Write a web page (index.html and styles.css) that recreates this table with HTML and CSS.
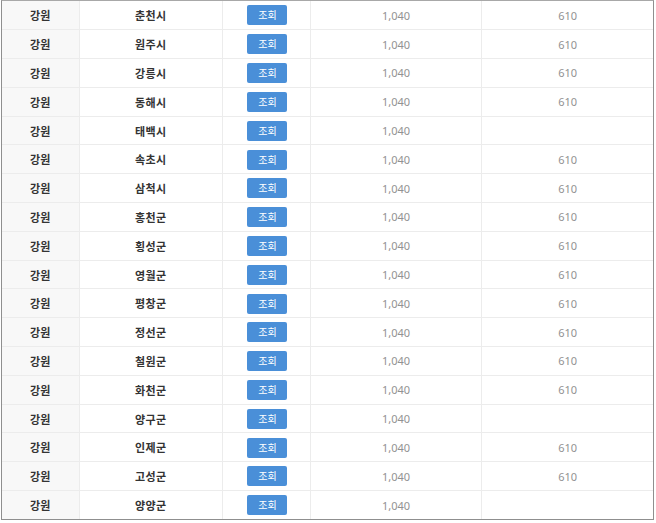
FILE: index.html
```html
<!DOCTYPE html>
<html lang="ko">
<head>
<meta charset="utf-8">
<title>강원 조회</title>
<link rel="stylesheet" href="styles.css">
</head>
<body>
<div class="frame">
<table class="list">
<colgroup>
<col class="c-region"><col class="c-city"><col class="c-btn"><col class="c-num"><col class="c-num">
</colgroup>
<tbody>
<tr><td class="region">강원</td><td class="city">춘천시</td><td class="act"><button class="btn">조회</button></td><td class="num">1,040</td><td class="num">610</td></tr>
<tr><td class="region">강원</td><td class="city">원주시</td><td class="act"><button class="btn">조회</button></td><td class="num">1,040</td><td class="num">610</td></tr>
<tr><td class="region">강원</td><td class="city">강릉시</td><td class="act"><button class="btn">조회</button></td><td class="num">1,040</td><td class="num">610</td></tr>
<tr><td class="region">강원</td><td class="city">동해시</td><td class="act"><button class="btn">조회</button></td><td class="num">1,040</td><td class="num">610</td></tr>
<tr><td class="region">강원</td><td class="city">태백시</td><td class="act"><button class="btn">조회</button></td><td class="num">1,040</td><td class="num"></td></tr>
<tr><td class="region">강원</td><td class="city">속초시</td><td class="act"><button class="btn">조회</button></td><td class="num">1,040</td><td class="num">610</td></tr>
<tr><td class="region">강원</td><td class="city">삼척시</td><td class="act"><button class="btn">조회</button></td><td class="num">1,040</td><td class="num">610</td></tr>
<tr><td class="region">강원</td><td class="city">홍천군</td><td class="act"><button class="btn">조회</button></td><td class="num">1,040</td><td class="num">610</td></tr>
<tr><td class="region">강원</td><td class="city">횡성군</td><td class="act"><button class="btn">조회</button></td><td class="num">1,040</td><td class="num">610</td></tr>
<tr><td class="region">강원</td><td class="city">영월군</td><td class="act"><button class="btn">조회</button></td><td class="num">1,040</td><td class="num">610</td></tr>
<tr><td class="region">강원</td><td class="city">평창군</td><td class="act"><button class="btn">조회</button></td><td class="num">1,040</td><td class="num">610</td></tr>
<tr><td class="region">강원</td><td class="city">정선군</td><td class="act"><button class="btn">조회</button></td><td class="num">1,040</td><td class="num">610</td></tr>
<tr><td class="region">강원</td><td class="city">철원군</td><td class="act"><button class="btn">조회</button></td><td class="num">1,040</td><td class="num">610</td></tr>
<tr><td class="region">강원</td><td class="city">화천군</td><td class="act"><button class="btn">조회</button></td><td class="num">1,040</td><td class="num">610</td></tr>
<tr><td class="region">강원</td><td class="city">양구군</td><td class="act"><button class="btn">조회</button></td><td class="num">1,040</td><td class="num"></td></tr>
<tr><td class="region">강원</td><td class="city">인제군</td><td class="act"><button class="btn">조회</button></td><td class="num">1,040</td><td class="num">610</td></tr>
<tr><td class="region">강원</td><td class="city">고성군</td><td class="act"><button class="btn">조회</button></td><td class="num">1,040</td><td class="num">610</td></tr>
<tr><td class="region">강원</td><td class="city">양양군</td><td class="act"><button class="btn">조회</button></td><td class="num">1,040</td><td class="num"></td></tr>
</tbody>
</table>
</div>
</body>
</html>
```

FILE: styles.css
```css
html, body {
  margin: 0;
  padding: 0;
  background: #ffffff;
}

.frame {
  margin-left: 1px;
  width: 651px;
  border: 1px solid #8f8f8f;
  border-top-color: #a8a8a8;
  background: #ffffff;
}

.list {
  width: 651px;
  table-layout: fixed;
  border-collapse: collapse;
  border-style: hidden;
}

.c-region { width: 77px; }
.c-city { width: 143px; }
.c-btn { width: 88px; }
.c-num { width: 171px; }

.list td {
  height: 28.8px;
  padding: 0;
  border: 1px solid #ececec;
  text-align: center;
  vertical-align: middle;
  box-sizing: border-box;
}

.list td.act {
  padding-left: 2px;
}

.region {
  background: #f8f8f8;
}

.region, .city {
  font-family: "Noto Sans CJK KR", "Noto Sans", sans-serif;
  font-size: 11px;
  font-weight: 700;
  color: #333333;
  letter-spacing: 0.3px;
}

.num {
  font-family: "Noto Sans", "Liberation Sans", sans-serif;
  font-size: 11px;
  color: #929292;
}

.btn {
  display: inline-block;
  width: 40px;
  height: 20px;
  margin: 0;
  padding: 0;
  border: 0;
  border-radius: 2px;
  background: #4a8fd8;
  color: #ffffff;
  font-family: "Noto Sans CJK KR", sans-serif;
  font-size: 10px;
  line-height: 20px;
  vertical-align: middle;
  cursor: pointer;
}
```
